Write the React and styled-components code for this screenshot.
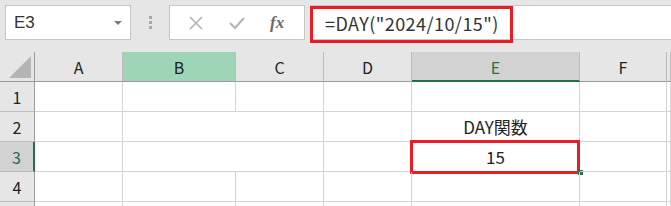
import React from 'react'
import styled, { createGlobalStyle } from 'styled-components'

const GlobalStyle = createGlobalStyle`
  html, body {
    margin: 0;
    padding: 0;
    background: #ffffff;
    overflow: hidden;
  }
  body {
    font-family: "Noto Sans CJK JP", "Noto Sans", sans-serif;
  }
`

const Page = styled.div`
  width: 671px;
  height: 206px;
  overflow: hidden;
  background: #ffffff;
`

const Toolbar = styled.div`
  display: flex;
  align-items: flex-start;
  height: 52px;
  padding: 5px 0 0 5px;
  box-sizing: border-box;
  background: #e6e6e6;
`

const NameBox = styled.div`
  position: relative;
  display: flex;
  align-items: center;
  width: 126px;
  height: 35px;
  box-sizing: border-box;
  padding-left: 8px;
  background: #ffffff;
  border: 1px solid #c6c6c6;
  color: #333333;
  font-family: "Liberation Sans", "Noto Sans", sans-serif;
  font-size: 17px;
`

const Caret = styled.span`
  position: absolute;
  right: 8px;
  top: 15px;
  width: 0;
  height: 0;
  border-left: 4px solid transparent;
  border-right: 4px solid transparent;
  border-top: 4px solid #7a7a7a;
`

const Grip = styled.div`
  display: flex;
  flex-direction: column;
  align-items: center;
  gap: 2px;
  width: 38px;
  padding-top: 11px;
`

const Dot = styled.span`
  width: 3px;
  height: 3px;
  background: #a8a8a8;
`

const FxButtons = styled.div`
  display: flex;
  align-items: center;
  justify-content: space-around;
  width: 136px;
  height: 35px;
  box-sizing: border-box;
  padding: 0 6px;
  background: #ffffff;
  border: 1px solid #c6c6c6;
`

const IconSlot = styled.span`
  display: flex;
  align-items: center;
  justify-content: center;
  width: 30px;
  height: 30px;
`

const FormulaField = styled.div`
  position: relative;
  flex: 1;
  display: flex;
  align-items: center;
  height: 35px;
  margin-left: 5px;
  box-sizing: border-box;
  padding-left: 14px;
  background: #ffffff;
  border: 1px solid #c6c6c6;
  border-right: none;
  color: #333333;
  font-size: 18px;
  letter-spacing: 0.45px;
  white-space: nowrap;
`

const RedFrame = styled.div`
  position: absolute;
  left: ${p => p.$left}px;
  top: ${p => p.$top}px;
  width: ${p => p.$width}px;
  height: ${p => p.$height}px;
  box-sizing: border-box;
  border: 3px solid #ec1c24;
  pointer-events: none;
`

const Sheet = styled.div`
  display: grid;
  grid-template-columns: 35px 88px 113px 88px 88px 168px 87px 1fr;
  grid-auto-rows: 30px;
`

const Corner = styled.div`
  position: relative;
  background: #e6e6e6;
  border-right: 1px solid #9b9b9b;
  border-bottom: 1px solid #9b9b9b;
`

const CornerTriangle = styled.span`
  position: absolute;
  right: 3px;
  bottom: 3px;
  width: 0;
  height: 0;
  border-left: 22px solid transparent;
  border-bottom: 22px solid #b5b5b5;
`

const ColHead = styled.div`
  display: flex;
  align-items: center;
  justify-content: center;
  box-sizing: border-box;
  background: ${p => (p.$tone === 'green' ? '#9fd5b7' : p.$tone === 'active' ? '#d2d2d2' : '#e6e6e6')};
  border-right: 1px solid #bdbdbd;
  border-bottom: ${p => (p.$tone === 'active' ? '2px solid #217346' : '1px solid #9b9b9b')};
  color: ${p => (p.$tone === 'active' ? '#217346' : '#222222')};
  font-size: 16px;
  padding-top: ${p => (p.$tone === 'active' ? '1px' : '0')};
`

const RowHead = styled.div`
  display: flex;
  align-items: center;
  justify-content: center;
  box-sizing: border-box;
  background: ${p => (p.$active ? '#d2d2d2' : '#e6e6e6')};
  border-right: ${p => (p.$active ? '2px solid #217346' : '1px solid #9b9b9b')};
  border-bottom: 1px solid #bdbdbd;
  color: ${p => (p.$active ? '#217346' : '#222222')};
  font-size: 16px;
`

const Cell = styled.div`
  position: relative;
  display: flex;
  align-items: center;
  justify-content: center;
  box-sizing: border-box;
  grid-column: ${p => (p.$span ? `span ${p.$span}` : 'auto')};
  border-right: 1px solid #d4d4d4;
  border-bottom: 1px solid #d4d4d4;
  color: #222222;
  font-size: 17px;
`

const FillHandle = styled.span`
  position: absolute;
  right: -4px;
  bottom: -4px;
  width: 5px;
  height: 5px;
  background: #217346;
`

const CrossIcon = () => (
  <svg width="16" height="16" viewBox="0 0 16 16">
    <path d="M2 2 L14 14 M14 2 L2 14" stroke="#b4b4b4" strokeWidth="1.6" fill="none" />
  </svg>
)

const CheckIcon = () => (
  <svg width="18" height="16" viewBox="0 0 18 16">
    <path d="M2 8 L7 13 L16 3" stroke="#b4b4b4" strokeWidth="2" fill="none" />
  </svg>
)

const FxIcon = () => (
  <svg width="20" height="20" viewBox="0 0 20 20">
    <text
      x="2"
      y="15"
      fontFamily="'Liberation Serif', serif"
      fontStyle="italic"
      fontWeight="bold"
      fontSize="17"
      fill="#6a6a6a"
    >
      fx
    </text>
  </svg>
)

const columns = [
  { label: 'A' },
  { label: 'B', tone: 'green' },
  { label: 'C' },
  { label: 'D' },
  { label: 'E', tone: 'active' },
  { label: 'F' },
  { label: '' },
]

const App = () => {
  return (
    <Page>
      <GlobalStyle />
      <Toolbar>
        <NameBox>
          E3
          <Caret />
        </NameBox>
        <Grip>
          <Dot />
          <Dot />
          <Dot />
        </Grip>
        <FxButtons>
          <IconSlot><CrossIcon /></IconSlot>
          <IconSlot><CheckIcon /></IconSlot>
          <IconSlot><FxIcon /></IconSlot>
        </FxButtons>
        <FormulaField>
          =DAY("2024/10/15")
          <RedFrame $left={-1} $top={0} $width={203} $height={37} />
        </FormulaField>
      </Toolbar>

      <Sheet>
        <Corner>
          <CornerTriangle />
        </Corner>
        {columns.map((c, i) => (
          <ColHead key={i} $tone={c.tone}>{c.label}</ColHead>
        ))}

        {/* row 1 */}
        <RowHead>1</RowHead>
        <Cell /><Cell /><Cell /><Cell /><Cell /><Cell /><Cell />

        {/* row 2: B:C merged */}
        <RowHead>2</RowHead>
        <Cell /><Cell $span={2} /><Cell />
        <Cell>DAY関数</Cell>
        <Cell /><Cell />

        {/* row 3: B:C merged, E3 active */}
        <RowHead $active>3</RowHead>
        <Cell /><Cell $span={2} /><Cell />
        <Cell>
          15
          <RedFrame $left={-2} $top={-2} $width={170} $height={34} />
          <FillHandle />
        </Cell>
        <Cell /><Cell />

        {/* row 4 */}
        <RowHead>4</RowHead>
        <Cell /><Cell /><Cell /><Cell /><Cell /><Cell /><Cell />

        {/* row 5, only its top edge is in view */}
        <RowHead />
        <Cell /><Cell /><Cell /><Cell /><Cell /><Cell /><Cell />
      </Sheet>
    </Page>
  )
}

export default App
